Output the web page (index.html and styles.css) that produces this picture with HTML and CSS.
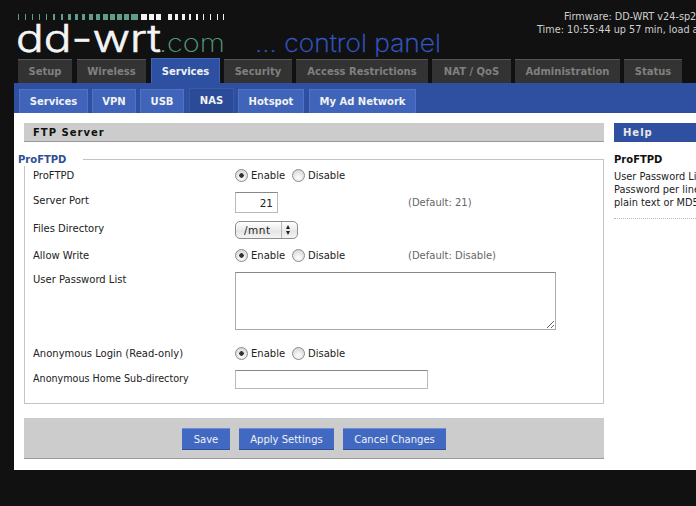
FILE: index.html
```html
<!DOCTYPE html>
<html lang="en">
<head>
<meta charset="utf-8">
<title>DD-WRT control panel</title>
<link rel="stylesheet" href="styles.css">
</head>
<body>
<header class="header">
  <svg class="logo" width="460" height="59" viewBox="0 0 460 59">
    <g class="ticks-green">
      <rect x="18" y="14" width="1" height="6"/><rect x="25" y="14" width="1" height="6"/><rect x="32" y="14" width="1" height="6"/><rect x="39" y="14" width="1" height="6"/><rect x="46" y="14" width="1" height="6"/><rect x="53" y="14" width="2" height="6"/><rect x="61" y="14" width="2" height="6"/><rect x="68" y="14" width="3" height="6"/><rect x="75" y="14" width="3" height="6"/><rect x="82" y="14" width="3" height="6"/><rect x="89" y="14" width="4" height="6"/><rect x="96" y="14" width="4" height="6"/><rect x="103" y="14" width="5" height="6"/><rect x="110" y="14" width="5" height="6"/><rect x="117" y="14" width="5" height="6"/><rect x="124" y="14" width="5" height="6"/><rect x="131" y="14" width="7" height="6"/>
    </g>
    <g class="ticks-white">
      <rect x="141" y="14" width="6" height="6"/><rect x="149" y="14" width="5" height="6"/><rect x="156" y="14" width="5" height="6"/><rect x="168" y="14" width="4" height="6"/><rect x="175" y="14" width="3" height="6"/><rect x="182" y="14" width="3" height="6"/><rect x="189" y="14" width="2" height="6"/><rect x="196" y="14" width="2" height="6"/><rect x="203" y="14" width="1" height="6"/><rect x="210" y="14" width="1" height="6"/><rect x="217" y="14" width="1" height="6"/><rect x="223" y="14" width="1" height="6"/>
    </g>
    <text class="logo-main" x="16" y="52" textLength="145" lengthAdjust="spacingAndGlyphs">dd-wrt</text>
    <text class="logo-com" x="159" y="52" textLength="66" lengthAdjust="spacingAndGlyphs">.com</text>
    <text class="logo-panel" x="255" y="52" textLength="186" lengthAdjust="spacingAndGlyphs">... control panel</text>
  </svg>
  <div class="info">
    <div class="info-firmware">Firmware: DD-WRT v24-sp2 (10/10/09) std</div>
    <div>Time: 10:55:44 up 57 min, load average: 0.00, 0.01, 0.00</div>
  </div>
</header>
<nav class="tabs">
  <a class="tab t-setup">Setup</a>
  <a class="tab t-wireless">Wireless</a>
  <a class="tab tab-active t-services">Services</a>
  <a class="tab t-security">Security</a>
  <a class="tab t-access">Access Restrictions</a>
  <a class="tab t-nat">NAT / QoS</a>
  <a class="tab t-admin">Administration</a>
  <a class="tab t-status">Status</a>
</nav>
<div class="page">
  <nav class="subtabs">
    <a class="sub s-services">Services</a>
    <a class="sub s-vpn">VPN</a>
    <a class="sub s-usb">USB</a>
    <a class="sub sub-active s-nas">NAS</a>
    <a class="sub s-hotspot">Hotspot</a>
    <a class="sub s-ad">My Ad Network</a>
  </nav>
  <div class="columns">
    <main class="main">
      <h2 class="title">FTP Server</h2>
      <fieldset class="group">
        <legend class="legend">ProFTPD</legend>
        <div class="row r-pro">
          <span class="label">ProFTPD</span>
          <span class="control radios">
            <input class="radio" type="radio" name="pro" checked><span class="rtext">Enable</span>
            <input class="radio" type="radio" name="pro"><span class="rtext">Disable</span>
          </span>
        </div>
        <div class="row r-port">
          <span class="label">Server Port</span>
          <span class="control"><input class="port" type="text" value="21"></span>
          <span class="note">(Default: 21)</span>
        </div>
        <div class="row r-dir">
          <span class="label">Files Directory</span>
          <span class="control"><span class="select-wrap"><select class="select"><option>/mnt</option></select></span></span>
        </div>
        <div class="row r-write">
          <span class="label">Allow Write</span>
          <span class="control radios">
            <input class="radio" type="radio" name="wr" checked><span class="rtext">Enable</span>
            <input class="radio" type="radio" name="wr"><span class="rtext">Disable</span>
          </span>
          <span class="note">(Default: Disable)</span>
        </div>
        <div class="row r-list">
          <span class="label">User Password List</span>
          <textarea class="area"></textarea>
        </div>
        <div class="row r-anon">
          <span class="label">Anonymous Login (Read-only)</span>
          <span class="control radios">
            <input class="radio" type="radio" name="an" checked><span class="rtext">Enable</span>
            <input class="radio" type="radio" name="an"><span class="rtext">Disable</span>
          </span>
        </div>
        <div class="row r-home">
          <span class="label">Anonymous Home Sub-directory</span>
          <input class="home" type="text">
        </div>
      </fieldset>
      <div class="actions">
        <button class="btn b-save" type="button">Save</button>
        <button class="btn b-apply" type="button">Apply Settings</button>
        <button class="btn b-cancel" type="button">Cancel Changes</button>
      </div>
    </main>
    <aside class="help">
      <h2 class="help-title">Help</h2>
      <h3 class="help-head">ProFTPD</h3>
      <p class="help-text">User Password List: One User<br>Password per line, separated by<br>plain text or MD5 encrypted</p>
    </aside>
  </div>
</div>
</body>
</html>
```

FILE: styles.css
```css
html, body { margin: 0; padding: 0; overflow: hidden; height: 100%; }
body {
  background: #111111;
  font-family: "DejaVu Sans", sans-serif;
  font-size: 10px;
  color: #222222;
  width: 696px;
}
.header { display: flex; height: 59px; }
.logo { flex: none; display: block; }
.ticks-green { fill: #5f9f88; }
.ticks-white { fill: #f2f2f2; }
.logo-main { font-family: Inter, sans-serif; font-weight: 300; font-size: 38px; fill: #f4f4f4; stroke: #f4f4f4; stroke-width: .6px; }
.logo-com { font-family: Inter, sans-serif; font-weight: 200; font-size: 25px; fill: #4f9a7c; }
.logo-panel { font-family: Inter, sans-serif; font-weight: 200; font-size: 24px; fill: #3358c8; stroke: #3358c8; stroke-width: .3px; }
.info {
  flex: none;
  margin: 10px 0 0 77px;
  font-size: 9.7px;
  line-height: 13px;
  color: #cfcfcf;
  white-space: nowrap;
}
.info-firmware { padding-left: 27px; }

.tabs { display: flex; height: 24px; padding-left: 18px; align-items: flex-end; }
.tab {
  box-sizing: border-box;
  height: 24px;
  margin-right: 4px;
  background: #333333;
  border-top: 1px solid #555555;
  color: #808080;
  font-weight: bold;
  font-size: 10px;
  line-height: 24px;
  text-align: center;
  white-space: nowrap;
}
.tab-active { height: 25px; background: #2d50a2; border: 1px solid #3f63b5; border-bottom: 0; color: #f0f0f0; line-height: 25px; }
.t-setup { width: 54px; margin-right: 5px; }
.t-wireless { width: 69px; margin-right: 5px; }
.t-services { width: 69px; }
.t-security { width: 68px; margin-right: 4px; }
.t-access { width: 132px; margin-right: 4px; }
.t-nat { width: 79px; margin-right: 4px; }
.t-admin { width: 105px; margin-right: 4px; }
.t-status { width: 58px; }

.page { width: 900px; margin-left: 14px; height: 387px; background: #ffffff; }
.subtabs { display: flex; align-items: flex-end; height: 30px; box-sizing: border-box; padding-left: 5px; background: #2f50a0; }
.sub {
  box-sizing: border-box;
  height: 24px;
  background: #3f64ba;
  border: 1px solid #5073c4;
  border-bottom: 0;
  color: #f2f2f2;
  font-weight: bold;
  font-size: 10px;
  line-height: 24px;
  text-align: center;
  white-space: nowrap;
}
.sub-active { height: 25px; background: #2b4b98; border-color: #3a5aa8; line-height: 24px; }
.s-services { width: 69px; margin-right: 4px; }
.s-vpn { width: 44px; margin-right: 4px; }
.s-usb { width: 44px; margin-right: 5px; }
.s-nas { width: 45px; margin-right: 4px; }
.s-hotspot { width: 66px; margin-right: 5px; }
.s-ad { width: 107px; }

.columns { display: flex; padding: 10px 0 0 10px; }
.main { flex: none; width: 580px; margin-right: 10px; }
.title {
  margin: 0;
  box-sizing: border-box;
  height: 19px;
  padding-left: 9px;
  background: #cccccc;
  border-bottom: 1px solid #999999;
  color: #111111;
  font-size: 10px;
  font-weight: bold;
  letter-spacing: 1px;
  line-height: 20px;
}
.group {
  box-sizing: border-box;
  margin: 10px 0 0;
  padding: 0;
  height: 252px;
  border: 1px solid #c4c4c4;
  min-width: 0;
}
.legend {
  margin-left: -7px;
  padding: 1px 16px 0 0;
  width: 49px;
  height: 13px;
  box-sizing: content-box;
  color: #2f4f96;
  font-size: 10px;
  font-weight: bold;
  line-height: 13px;
  background: #ffffff;
}
.row { display: flex; align-items: center; padding-left: 8px; white-space: nowrap; }
.label { flex: none; width: 202px; }
.control { flex: none; width: 173px; display: flex; align-items: center; }
.note { color: #666666; }
.r-pro { height: 16px; margin-top: 1px; }
.r-port { height: 21px; margin-top: 9px; }
.r-port .label { margin-bottom: 5px; }
.r-dir { height: 18px; margin-top: 8px; }
.r-dir .label { margin-bottom: 3px; }
.r-write { height: 16px; margin-top: 8px; }
.r-list { align-items: flex-start; margin-top: 9px; }
.r-list .label { margin-top: 2px; }
.r-anon { height: 16px; margin-top: 15px; }
.r-home { height: 19px; margin-top: 9px; }
.r-home .label { margin-bottom: 2px; font-size: 9.6px; }

.radio {
  appearance: none;
  flex: none;
  box-sizing: border-box;
  width: 13px;
  height: 13px;
  margin: 0 3px 0 0;
  border: 1px solid #8c8c8c;
  border-radius: 50%;
  background: radial-gradient(circle at 50% 70%, #ffffff, #cfcfcf);
}
.radio:checked { background: radial-gradient(circle, #333333 0 2px, transparent 2.5px), radial-gradient(circle at 50% 70%, #ffffff, #cfcfcf); }
.rtext { width: 41px; }
.port {
  box-sizing: border-box;
  width: 43px;
  height: 21px;
  padding: 0 4px 0 0;
  border: 1px solid #bbbbbb;
  border-top-color: #888888;
  background: #ffffff;
  color: #222222;
  font: 10.5px "DejaVu Sans", sans-serif;
  text-align: right;
  border-radius: 0;
  outline: 0;
}
.select-wrap { position: relative; display: block; width: 63px; height: 18px; }
.select-wrap::before {
  content: "";
  position: absolute;
  left: 51px;
  top: 4px;
  border: 3px solid transparent;
  border-top: 0;
  border-bottom: 4px solid #222222;
  border-left-width: 2.5px;
  border-right-width: 2.5px;
}
.select-wrap::after {
  content: "";
  position: absolute;
  left: 51px;
  top: 10px;
  border: 3px solid transparent;
  border-bottom: 0;
  border-top: 4px solid #222222;
  border-left-width: 2.5px;
  border-right-width: 2.5px;
}
.select {
  appearance: none;
  display: block;
  box-sizing: border-box;
  width: 63px;
  height: 18px;
  padding: 0 0 0 8px;
  border: 1px solid #8c8c8c;
  border-radius: 5px;
  background: linear-gradient(#b4b4b4, #b4b4b4) 45px 0 / 1px 100% no-repeat, linear-gradient(#ffffff, #e6e6e6 60%, #f4f4f4);
  color: #222222;
  font: 10.5px "DejaVu Sans", sans-serif;
  letter-spacing: .5px;
}
.area {
  flex: none;
  box-sizing: border-box;
  width: 321px;
  height: 58px;
  margin: 0;
  padding: 0;
  border: 1px solid #aaaaaa;
  border-top-color: #888888;
  border-radius: 0;
  background: #ffffff;
  outline: 0;
}
.home {
  flex: none;
  box-sizing: border-box;
  width: 193px;
  height: 19px;
  padding: 0;
  border: 1px solid #bbbbbb;
  border-top-color: #888888;
  border-radius: 0;
  background: #ffffff;
  outline: 0;
}
.actions {
  box-sizing: border-box;
  display: flex;
  height: 41px;
  margin-top: 14px;
  padding: 10px 0 0 158px;
  gap: 9px;
  background: #cccccc;
  border-bottom: 1px solid #999999;
}
.btn {
  box-sizing: border-box;
  height: 22px;
  padding: 0;
  border: 0;
  border-top: 1px solid #6f8fd6;
  border-bottom: 1px solid #2f4f96;
  background: #4169c2;
  color: #f2f2f2;
  font: 10px "DejaVu Sans", sans-serif;
  white-space: nowrap;
}
.b-save { width: 48px; }
.b-apply { width: 95px; }
.b-cancel { width: 103px; }

.help { flex: none; width: 200px; }
.help-title {
  margin: 0;
  box-sizing: border-box;
  height: 19px;
  padding-left: 9px;
  background: #2f50a0;
  color: #e8e8e8;
  font-size: 10px;
  font-weight: bold;
  letter-spacing: 1px;
  line-height: 20px;
}
.help-head { margin: 11px 0 0; font-size: 10px; font-weight: bold; line-height: 13px; color: #111111; }
.help-text {
  margin: 4px 0 0;
  padding-bottom: 9px;
  font-size: 9.8px;
  line-height: 13px;
  white-space: nowrap;
  color: #222222;
  border-bottom: 1px dotted #bbbbbb;
}
```
